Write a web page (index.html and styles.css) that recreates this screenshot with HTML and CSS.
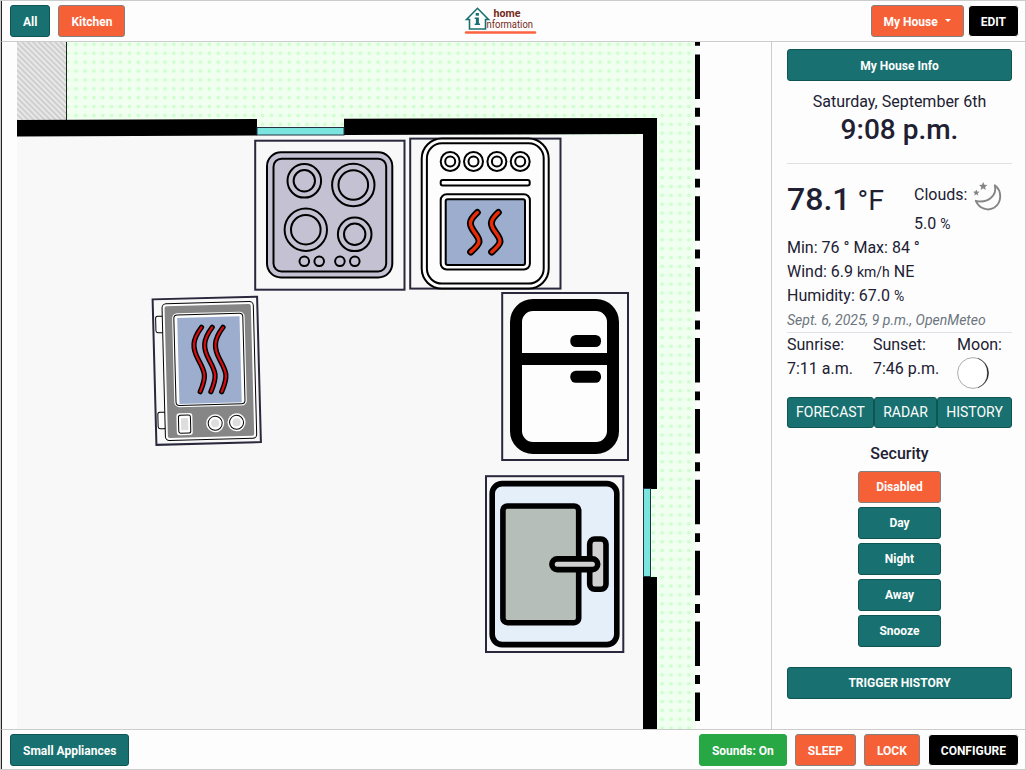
FILE: index.html
```html
<!DOCTYPE html>
<html lang="en">
<head>
<meta charset="utf-8">
<title>Home Information</title>
<link rel="stylesheet" href="styles.css">
</head>
<body>
<div class="app">
  <header class="bar top">
    <div class="group"><button class="btn teal">All</button><button class="btn orange">Kitchen</button></div>
    <svg class="logo" width="74" height="30" viewBox="464 5 74 30">
      <path d="M466.500 19.500 477.500 8.300l11 11.200h-3v9.500h-16v-9.500z" fill="#fff" stroke="#187170" stroke-width="1.600"/>
      <rect x="475.700" y="13" width="3.200" height="2.700" fill="#187170"/>
      <path d="M474.700 17.500h4.200v6h1.200v1.500h-5.400v-1.500h1.200v-4.500h-1.200z" fill="#187170"/>
      <text class="logo-home" x="493.500" y="16.700" textLength="27" lengthAdjust="spacingAndGlyphs">home</text>
      <text class="logo-info" x="486.500" y="28" textLength="46.500" lengthAdjust="spacingAndGlyphs">nformation</text>
      <path d="M466 32.500h69" stroke="#fb6340" stroke-width="2.400" stroke-linecap="round"/>
    </svg>
    <div class="group right"><button class="btn orange house">My House<span class="caret"></span></button><button class="btn black">EDIT</button></div>
  </header>
  <main class="content">
    <svg class="map" viewBox="2 42 769 687" width="769" height="687">
      <defs>
        <pattern id="grass" x="71.700" y="39.900" width="8.880" height="8.880" patternUnits="userSpaceOnUse">
          <rect width="9" height="9" fill="#f0fff0"/><circle cx="4.440" cy="4.440" r="1.850" fill="#ccffcc"/>
        </pattern>
        <pattern id="hatch" width="3.900" height="8" patternUnits="userSpaceOnUse" patternTransform="rotate(-45 17 42)">
          <rect width="4" height="8" fill="#e8e8e8"/><path d="M1 0v8" stroke="#aaa" stroke-width=".8"/>
        </pattern>
      </defs>
      <rect x="67" y="42" width="629" height="687" fill="url(#grass)"/>
      <rect x="17" y="42" width="50" height="80" fill="url(#hatch)"/>
      <path d="M66.500 42v79" stroke="#222"/>
      <rect x="17" y="135" width="628" height="594" fill="#f8f8f8"/>
      <path d="M17 120 257 119v16.500L17 136.500zM344 118.700 657 118v371h-14V134l-299 1zM643 577h14v152h-14z"/>
      <rect x="257" y="127.500" width="87" height="7.500" fill="#7ae5df" stroke="#234"/>
      <rect x="643.500" y="488.500" width="7" height="88" fill="#7ae5df" stroke="#234"/>
      <path d="M697.500-16.500V721" fill="none" stroke="#000" stroke-width="5" stroke-dasharray="44.500 8.900 8.900 8.600"/>

      <g class="cooktop" fill="#c4c2d2" stroke="#000" stroke-width="2">
        <rect class="bound" x="255.200" y="140.700" width="149.300" height="149"/>
        <rect x="267" y="152.300" width="125.300" height="125.200" rx="14"/>
        <rect x="273.500" y="158.700" width="112.700" height="112.800" rx="8"/>
        <circle cx="304.300" cy="180.800" r="16.800"/><circle cx="304.300" cy="180.800" r="10.700"/>
        <circle cx="353.300" cy="185" r="21.200"/><circle cx="353.300" cy="185" r="14.800"/>
        <circle cx="305.800" cy="229.700" r="21.200"/><circle cx="305.800" cy="229.700" r="14.800"/>
        <circle cx="354.700" cy="234.300" r="16.800"/><circle cx="354.700" cy="234.300" r="10.700"/>
        <circle cx="304.300" cy="261.300" r="4.800"/><circle cx="319.200" cy="261.300" r="4.800"/>
        <circle cx="339.900" cy="261.300" r="4.800"/><circle cx="354.800" cy="261.300" r="4.800"/>
      </g>

      <g class="oven" fill="#fdfdfd" stroke="#000" stroke-width="2">
        <rect class="bound" x="410.200" y="138.600" width="150.300" height="150"/>
        <rect x="421.700" y="138.600" width="127" height="150" rx="20"/>
        <rect x="426.900" y="143.300" width="116.800" height="140.300" rx="15"/>
        <circle cx="450.200" cy="161.500" r="9.500"/><circle cx="450.200" cy="161.500" r="5"/>
        <circle cx="473.500" cy="161.500" r="9.500"/><circle cx="473.500" cy="161.500" r="5"/>
        <circle cx="496.900" cy="161.500" r="9.500"/><circle cx="496.900" cy="161.500" r="5"/>
        <circle cx="520.200" cy="161.500" r="9.500"/><circle cx="520.200" cy="161.500" r="5"/>
        <rect x="440.700" y="180" width="89" height="5.500" rx="2"/>
        <rect x="440.700" y="194.300" width="89.200" height="75.200" rx="6"/>
        <rect x="445.700" y="199.300" width="79.300" height="65.700" rx="2" fill="#9cadce"/>
        <g class="steam">
          <path d="M477.300 212.500C468 221 469 225 475 233s6 10-4.300 19"/>
          <path d="M498.300 212.500C489 221 490 225 496 233s6 10-4.300 19"/>
        </g>
        <g class="heat">
          <path d="M477.300 212.500C468 221 469 225 475 233s6 10-4.300 19"/>
          <path d="M498.300 212.500C489 221 490 225 496 233s6 10-4.300 19"/>
        </g>
      </g>

      <g transform="rotate(-1.500 207 370.600)" fill="#fdfdfd" stroke="#000">
        <rect class="bound" x="154.500" y="298" width="104.500" height="145.500"/>
        <rect x="157" y="315" width="8" height="16.500" rx="2"/>
        <rect x="156.700" y="411" width="8" height="16.500" rx="2"/>
        <rect x="163.700" y="302.700" width="91.300" height="136.800" rx="4"/>
        <rect x="166.200" y="305.200" width="86.300" height="131.800" rx="2" fill="#868686" stroke="none"/>
        <rect x="173.500" y="312.500" width="72.500" height="94" rx="5" stroke="none"/>
        <rect x="175.200" y="314.200" width="69" height="90.500" rx="3.500"/>
        <rect x="178.600" y="317.200" width="62.300" height="86" fill="#9cadce" stroke="none"/>
        <rect x="175.200" y="412.500" width="16" height="22" rx="3" stroke="none"/>
        <rect x="177.200" y="414.500" width="12" height="18" rx="2"/>
        <rect x="179.700" y="417.500" width="7" height="12" fill="#ddd" stroke="none"/>
        <g stroke="none"><circle cx="213.800" cy="423.500" r="9"/><circle cx="235.200" cy="423.100" r="9"/></g>
        <circle cx="213.800" cy="423.500" r="7"/><circle cx="235.200" cy="423.100" r="7"/>
        <g fill="#ddd" stroke="none"><circle cx="213.800" cy="423.500" r="4"/><circle cx="235.200" cy="423.100" r="4"/></g>
      </g>
      <g class="steam thin">
        <path d="M201.500 327.300C192 340 192 348 198.500 360s8.500 16 1.700 31.700M212.200 327.300c-9.500 12.700-9.500 20.700-3 32.700s8.500 16 1.700 31.700M223 327.300c-9.500 12.700-9.500 20.700-3 32.700s8.500 16 1.700 31.700"/>
      </g>
      <g class="heat thin">
        <path d="M201.500 327.300C192 340 192 348 198.500 360s8.500 16 1.700 31.700M212.200 327.300c-9.500 12.700-9.500 20.700-3 32.700s8.500 16 1.700 31.700M223 327.300c-9.500 12.700-9.500 20.700-3 32.700s8.500 16 1.700 31.700"/>
      </g>

      <g class="fridge">
        <rect class="bound" x="502.200" y="293" width="125.800" height="167"/>
        <rect x="516" y="305" width="97" height="143" rx="17" fill="#fdfdfd" stroke="#000" stroke-width="12"/>
        <path d="M516 359h97" stroke="#000" stroke-width="12"/>
        <rect x="570.300" y="335" width="30.700" height="12" rx="5.500"/>
        <rect x="570.300" y="370.800" width="30.700" height="12" rx="5.500"/>
      </g>

      <g class="sink" stroke="#000" stroke-width="5.600">
        <rect class="bound" x="486" y="476.200" width="137.300" height="175.800"/>
        <rect x="492.200" y="483.600" width="124.600" height="161" rx="10" fill="#e5effa"/>
        <rect x="502.900" y="506" width="75.800" height="116.700" rx="4.500" fill="#b6beb9"/>
        <rect x="589.700" y="539" width="16.300" height="50.200" rx="5" fill="#d0d0d0"/>
        <rect x="551.900" y="558.900" width="45.800" height="10.700" rx="5.300" fill="#d0d0d0"/>
      </g>
    </svg>
    <aside class="side">
      <button class="btn teal wide info">My House Info</button>
      <div class="date">Saturday, September 6th</div>
      <div class="time">9:08 p.m.</div>
      <hr>
      <section class="weather">
        <div class="now">
          <div class="temp"><b>78.1</b> °F</div>
          <div class="clouds">
            <div class="sky">Clouds:
              <svg width="30" height="30" viewBox="0 0 30 30" fill="#858585">
                <path d="M22.800 3.200C25.500 13.500 15.500 21.800 3.800 18.800 7.500 27 16 29.300 22 25.800 30.300 20.500 30 8.500 22.800 3.200z" fill="none" stroke="#858585" stroke-width="1.900" stroke-linejoin="round"/>
                <path d="m11.200 0 1.200 2.700 3 .2-2.300 2 .7 3-2.600-1.600-2.600 1.600.7-3-2.300-2 3-.2zM4.300 7.500l.9 2 2.300.2-1.700 1.500.5 2.300-2-1.200-2 1.200.5-2.300L1.100 9.700l2.300-.2z"/>
              </svg>
            </div>
            <div>5.0 <small>%</small></div>
          </div>
        </div>
        <div class="row">Min: 76 ° Max: 84 °</div>
        <div class="row">Wind: 6.9 <small>km/h</small> NE</div>
        <div class="row">Humidity: 67.0 <small>%</small></div>
        <div class="source">Sept. 6, 2025, 9 p.m., OpenMeteo</div>
        <div class="astro">
          <div>Sunrise:<br>7:11 a.m.</div>
          <div class="sunset">Sunset:<br>7:46 p.m.</div>
          <div>Moon:<svg class="moon" width="32" height="32" viewBox="0 0 32 32"><circle cx="16" cy="16" r="15.400" fill="#fff" stroke="#888" stroke-width=".7"/><path d="M21 1.300a15.500 15.500 0 0 1 0 29.400 16.200 16.200 0 0 0 0-29.400z" fill="#222" stroke="#222" stroke-width=".3"/></svg></div>
        </div>
        <div class="links"><button class="btn teal link f">FORECAST</button><button class="btn teal link r">RADAR</button><button class="btn teal link h">HISTORY</button></div>
      </section>
      <section class="security">
        <div class="title">Security</div>
        <button class="btn orange">Disabled</button>
        <button class="btn teal">Day</button>
        <button class="btn teal">Night</button>
        <button class="btn teal">Away</button>
        <button class="btn teal">Snooze</button>
      </section>
      <button class="btn teal wide">TRIGGER HISTORY</button>
    </aside>
  </main>
  <footer class="bar bottom">
    <button class="btn teal">Small Appliances</button>
    <div class="group"><button class="btn green">Sounds: On</button><button class="btn orange">SLEEP</button><button class="btn orange">LOCK</button><button class="btn black">CONFIGURE</button></div>
  </footer>
</div>
</body>
</html>
```
FILE: styles.css
```css
* { box-sizing: border-box; }
body { margin: 0; font: 16px/24px Roboto, sans-serif; color: #212033; background: #fdfdfd; }
.app { width: 1026px; height: 770px; display: flex; flex-direction: column; border: 1px solid #ccc; overflow: hidden; }
.bar { display: flex; justify-content: space-between; align-items: center; flex: none; padding: 0 6px 0 8px; border-left: 1px solid #222; }
.top { height: 41px; border-bottom: 1px solid #ccc; position: relative; }
.bottom { height: 40px; border-top: 1px solid #ccc; padding-top: 1px; }
.group { display: flex; gap: 8px; }
.group.right { gap: 4px; }
.logo { position: absolute; left: 462px; top: 4px; }
.logo text { fill: #752b1a; font-family: Roboto, sans-serif; font-size: 10.5px; }
.logo .logo-home { font-weight: 700; }
.btn { font: 700 12px/18px Roboto, sans-serif; height: 32px; padding: 0 12px; border: 1px solid; border-radius: 3px; color: #fdfdfd; white-space: nowrap; }
.bar .btn, .btn.info { padding-top: 2px; }
.teal { background: #187170; border-color: #0e5554; }
.orange { background: #f66037; border-color: #84807d; }
.green { background: #28a745; border-color: #28a745; }
.black { background: #000; border-color: #fdfdfd; border-radius: 4px; }
.caret { display: inline-block; margin-left: 7px; vertical-align: 4px; border: 3px solid transparent; border-top-color: #fff; border-bottom: 0; }
.content { flex: 1; display: flex; min-height: 0; border-left: 1px solid #222; }
.map { flex: none; display: block; }
.map .bound { fill: #f8f8f8; stroke: #29283c; stroke-width: 2; }
.steam { fill: none; stroke: #000; stroke-width: 7; stroke-linecap: round; }
.heat { fill: none; stroke: #e92c08; stroke-width: 3.4; stroke-linecap: round; }
.steam.thin { stroke-width: 5.2; }
.heat.thin { stroke: #d80c12; stroke-width: 2.2; }
.side { flex: 1; display: flex; flex-direction: column; border-left: 1px solid #ccc; padding: 7px 13px 0 15px; }
.wide { width: 100%; flex: none; }
.date { text-align: center; margin-top: 9px; line-height: 24px; }
.time { text-align: center; font-size: 28px; font-weight: 500; line-height: 32px; }
hr { width: 100%; border: 0; border-top: 1px solid #e1e1e3; margin: 17px 0 18px; }
.now { display: flex; height: 54px; }
.temp { width: 127px; font-size: 28.5px; line-height: 34px; white-space: nowrap; }
.temp b { font-size: 32px; font-weight: 500; }
.sky { display: flex; gap: 5px; height: 30px; line-height: 26px; white-space: nowrap; }
small { font-size: 14px; }
.source { color: #6c757d; font-size: 14px; font-style: italic; height: 25px; border-bottom: 1px solid #dee2e6; white-space: nowrap; }
.astro { display: flex; justify-content: space-between; padding-right: 10px; height: 64px; white-space: nowrap; }
.sunset { padding-left: 2px; }
.moon { display: block; }
.links { display: flex; }
.link { font-size: 14px; font-weight: 400; height: 31px; padding: 0 0 1px; }
.f { width: 87px; }
.r { width: 63px; }
.h { width: 75px; }
.security { display: flex; flex-direction: column; align-items: center; gap: 4px; padding: 14px 0 20px; }
.security .title { font-weight: 500; height: 25px; }
.security .btn { width: 83px; }
```
